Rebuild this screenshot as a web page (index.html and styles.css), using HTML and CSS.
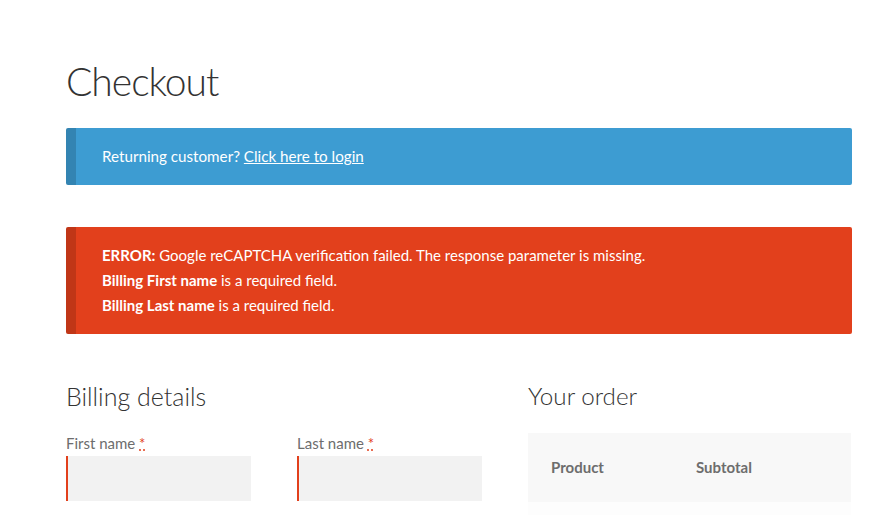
FILE: index.html
```html
<!DOCTYPE html>
<html lang="en">
<head>
<meta charset="utf-8">
<title>Checkout</title>
<link rel="stylesheet" href="styles.css">
</head>
<body>
<main class="page">
  <h1 class="title">Checkout</h1>
  <div class="notice notice-info">Returning customer? <a href="#" class="notice-link">Click here to login</a></div>
  <ul class="notice notice-error">
    <li><strong>ERROR:</strong> Google reCAPTCHA verification failed. The response parameter is missing.</li>
    <li><strong>Billing First name</strong> is a required field.</li>
    <li><strong>Billing Last name</strong> is a required field.</li>
  </ul>
  <div class="cols">
    <section class="billing">
      <h3 class="section-title">Billing details</h3>
      <div class="name-row">
        <div class="field">
          <label class="field-label">First name <abbr class="required" title="required">*</abbr></label>
          <input class="input input-invalid" type="text">
        </div>
        <div class="field">
          <label class="field-label">Last name <abbr class="required" title="required">*</abbr></label>
          <input class="input input-invalid" type="text">
        </div>
      </div>
    </section>
    <section class="order">
      <h3 class="section-title">Your order</h3>
      <table class="order-table">
        <thead>
          <tr><th class="col-product">Product</th><th class="col-subtotal">Subtotal</th></tr>
        </thead>
        <tbody>
          <tr class="order-row"><td></td><td></td></tr>
        </tbody>
      </table>
    </section>
  </div>
</main>
</body>
</html>
```

FILE: styles.css
```css
html, body {
  margin: 0;
  padding: 0;
  background: #ffffff;
}
body {
  font-family: "Lato", "Liberation Sans", sans-serif;
  font-size: 15.2px;
  line-height: 25px;
  color: #6d6d6d;
  overflow: hidden;
}
.page {
  width: 786px;
  margin-left: 66px;
}
.title {
  margin: 0;
  padding-top: 56px;
  height: 50px;
  line-height: 50px;
  font-size: 39px;
  font-weight: 300;
  letter-spacing: -1px;
  color: #333333;
  margin-bottom: 22px;
}
.notice {
  margin: 0 0 42px 0;
  padding: 16px 20px 16px 26px;
  border-left: 10px solid rgba(0, 0, 0, 0.15);
  border-radius: 2px;
  color: #ffffff;
  list-style: none;
}
.notice-info {
  background: #3d9cd2;
}
.notice-link {
  color: #ffffff;
  text-decoration: underline;
}
.notice-error {
  background: #e2401c;
  margin-bottom: 46px;
  font-size: 15px;
}
.notice-error strong {
  font-weight: 700;
}
.cols {
  display: flex;
  justify-content: space-between;
}
.billing {
  width: 416px;
}
.order {
  width: 324px;
}
.section-title {
  margin: 0 0 19px 0;
  font-size: 25px;
  line-height: 32px;
  font-weight: 300;
  color: #333333;
}
.order .section-title {
  margin-bottom: 21px;
  font-size: 24.2px;
}
.name-row {
  display: grid;
  grid-template-columns: 185px 185px;
  column-gap: 46px;
}
.field {
  display: flex;
  flex-direction: column;
}
.field-label {
  font-size: 15px;
  line-height: 25px;
  color: #6d6d6d;
}
.required {
  color: #e2401c;
  text-decoration: underline dotted;
}
.input {
  box-sizing: border-box;
  height: 45px;
  margin: 0;
  border: 0;
  background: #f2f2f2;
  font: inherit;
}
.input-invalid {
  border-left: 2px solid #e2401c;
}
.order-table {
  width: 323px;
  border-collapse: collapse;
  border-spacing: 0;
}
.order-table th {
  background: #f8f8f8;
  text-align: left;
  font-weight: 700;
  font-size: 15px;
  color: #6d6d6d;
  padding: 22px 23px;
  height: 25px;
}
.col-product {
  width: 99px;
}
.order-row td {
  background: #fdfdfd;
  height: 40px;
}
```
